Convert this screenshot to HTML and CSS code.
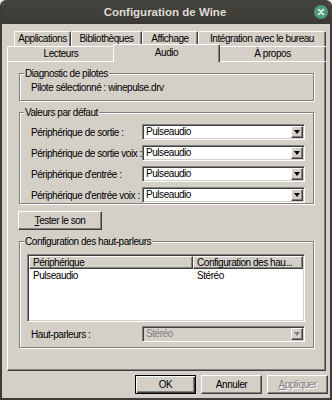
FILE: index.html
```html
<!DOCTYPE html>
<html lang="fr">
<head>
    <meta charset="UTF-8">
    <title>Configuration de Wine</title>
    <link rel="stylesheet" href="styles.css">
</head>
<body>

<div class="window">
    <div class="titlebar">
        <span></span>
        <span class="title">Configuration de Wine</span>
        <span class="close-wrap">
            <svg class="close" width="14" height="14" viewBox="0 0 14 14">
                <circle cx="7" cy="7" r="7" fill="#4e9a7c"/>
                <path d="M4.5 4.5 L9.5 9.5 M9.5 4.5 L4.5 9.5" stroke="#eef4f0" stroke-width="1.6" stroke-linecap="round"/>
            </svg>
        </span>
    </div>

    <div class="content">
        <div class="tabs">
            <div class="tabrow back">
                <div class="tab w-apps">Applications</div>
                <div class="tab w-libs">Bibliothèques</div>
                <div class="tab w-disp">Affichage</div>
                <div class="tab w-desk">Intégration avec le bureau</div>
            </div>
            <div class="tabrow front">
                <div class="tab w-drives">Lecteurs</div>
                <div class="tab w-audio active">Audio</div>
                <div class="tab w-about">À propos</div>
            </div>
        </div>

        <div class="panel">
            <div class="group g-diag">
                <span class="legend">Diagnostic de pilotes</span>
                <div class="driver">Pilote sélectionné : winepulse.drv</div>
            </div>

            <div class="group g-defaults">
                <span class="legend">Valeurs par défaut</span>
                <div class="row">
                    <label>Périphérique de sortie :</label>
                    <div class="combo"><span class="value">Pulseaudio</span><span class="arrow"></span></div>
                </div>
                <div class="row">
                    <label>Périphérique de sortie voix :</label>
                    <div class="combo"><span class="value">Pulseaudio</span><span class="arrow"></span></div>
                </div>
                <div class="row">
                    <label>Périphérique d'entrée :</label>
                    <div class="combo"><span class="value">Pulseaudio</span><span class="arrow"></span></div>
                </div>
                <div class="row">
                    <label>Périphérique d'entrée voix :</label>
                    <div class="combo"><span class="value">Pulseaudio</span><span class="arrow"></span></div>
                </div>
            </div>

            <button class="btn test"><u>T</u>ester le son</button>

            <div class="group g-speakers">
                <span class="legend">Configuration des haut-parleurs</span>
                <div class="listview">
                    <div class="lv-head">
                        <div class="hcell c1">Périphérique</div>
                        <div class="hcell c2">Configuration des hau...</div>
                    </div>
                    <div class="lv-row">
                        <div class="cell c1">Pulseaudio</div>
                        <div class="cell c2">Stéréo</div>
                    </div>
                </div>
                <div class="row">
                    <label>Haut-parleurs :</label>
                    <div class="combo disabled"><span class="value">Stéréo</span><span class="arrow"></span></div>
                </div>
            </div>
        </div>

        <div class="actions">
            <button class="btn default">OK</button>
            <button class="btn">Annuler</button>
            <button class="btn" disabled><u>A</u>ppliquer</button>
        </div>
    </div>
</div>

</body>
</html>
```

FILE: styles.css
```css
* {
    box-sizing: border-box;
}
html, body {
    margin: 0;
    background: #eeeeec;
}
body {
    font-family: "Liberation Sans", Arial, sans-serif;
    font-size: 10px;
    letter-spacing: -0.45px;
    color: #000;
}
.window {
    width: 332px;
    height: 400px;
    background: #d4d0c8;
    border: 2px solid #3c3b37;
    border-top: 0;
    border-radius: 6px 6px 0 0;
    display: flex;
    flex-direction: column;
    overflow: hidden;
}

/* title bar */
.titlebar {
    height: 24px;
    flex: none;
    display: grid;
    grid-template-columns: 1fr auto 1fr;
    align-items: center;
    background: linear-gradient(#45443f, #3a3935);
    padding-right: 2px;
}
.title {
    font-weight: bold;
    font-size: 11.5px;
    letter-spacing: 0;
    color: #dfdbd2;
}
.close-wrap {
    display: flex;
    justify-content: flex-end;
}
.close {
    display: block;
}

/* tabs */
.content {
    flex: 1;
    display: flex;
    flex-direction: column;
}
.tabs {
    margin-top: 7px;
}
.tabrow {
    display: flex;
    height: 15px;
}
.tabrow.back {
    margin-left: 12px;
}
.tabrow.front {
    margin-left: 5px;
}
.tab {
    height: 15px;
    border-top: 1px solid #fff;
    border-left: 1px solid #fff;
    border-right: 1px solid #404040;
    box-shadow: inset -1px 0 #808080;
    border-radius: 2px 2px 0 0;
    text-align: center;
    line-height: 13px;
    white-space: nowrap;
}
.w-apps { width: 57px; }
.w-libs { width: 71px; }
.w-disp { width: 56px; }
.w-desk { width: 128px; }
.w-drives { width: 108px; }
.w-audio { width: 104px; }
.w-about { width: 107px; }
.tab.active {
    position: relative;
    z-index: 1;
    width: 107px;
    height: 18px;
    margin: -2px -1px -1px -2px;
    padding-top: 1px;
    background: #d4d0c8;
}

/* panel */
.panel {
    width: 319px;
    height: 310px;
    margin-left: 5px;
    border: 1px solid;
    border-color: #fff #404040 #404040 #fff;
    box-shadow: inset -1px -1px #808080;
    padding: 11px 11px 0;
    display: flex;
    flex-direction: column;
}
.group {
    border: 1px solid #808080;
    box-shadow: inset 1px 1px #fff, 1px 1px #fff;
    padding: 0 7px 0 11px;
    display: flex;
    flex-direction: column;
    flex: none;
}
.legend {
    align-self: flex-start;
    margin: -7px 0 0 -7px;
    padding: 0 1px;
    height: 13px;
    line-height: 13px;
    background: #d4d0c8;
}
.g-diag {
    height: 28px;
}
.driver {
    margin-top: 1px;
    line-height: 13px;
}
.g-defaults {
    height: 92px;
    margin-top: 11px;
    gap: 5px;
}
.g-speakers {
    height: 107px;
    margin-top: 11px;
}
.row {
    display: flex;
    align-items: center;
    height: 16px;
    flex: none;
}
.row label {
    width: 111px;
    white-space: nowrap;
}

/* combo box */
.combo {
    width: 163px;
    height: 16px;
    display: flex;
    align-items: center;
    background: #fff;
    border: 1px solid;
    border-color: #808080 #fff #fff #808080;
    box-shadow: inset 1px 1px #404040, inset -1px -1px #d4d0c8;
    padding: 1px;
}
.combo .value {
    flex: 1;
    padding-left: 2px;
    line-height: 12px;
}
.arrow {
    width: 12px;
    height: 12px;
    background: #d4d0c8;
    border: 1px solid;
    border-color: #fff #404040 #404040 #fff;
    box-shadow: inset -1px -1px #808080;
    display: flex;
    align-items: center;
    justify-content: center;
}
.arrow::after {
    content: "";
    border-left: 3.5px solid transparent;
    border-right: 3.5px solid transparent;
    border-top: 4px solid #000;
    margin: 0 1px 0 0;
}
.combo.disabled {
    background: #d4d0c8;
    color: #808080;
}
.combo.disabled .arrow::after {
    border-top-color: #808080;
}

/* list view */
.listview {
    width: 278px;
    height: 68px;
    margin: 6px 0 4px -4px;
    background: #fff;
    border: 1px solid;
    border-color: #808080 #fff #fff #808080;
    box-shadow: inset 1px 1px #404040, inset -1px -1px #d4d0c8;
    padding: 1px;
}
.lv-head, .lv-row {
    display: flex;
    line-height: 13px;
}
.hcell {
    height: 13px;
    background: #d4d0c8;
    border: 1px solid;
    border-color: #fff #404040 #404040 #fff;
    box-shadow: inset -1px -1px #808080;
    line-height: 11px;
    padding-left: 3px;
    white-space: nowrap;
}
.c1 { width: 164px; }
.c2 { width: 110px; }
.cell {
    padding-left: 4px;
}

/* buttons */
.btn {
    font: inherit;
    letter-spacing: inherit;
    color: #000;
    width: 61px;
    height: 19px;
    padding: 0;
    background: #d4d0c8;
    border: 1px solid;
    border-color: #fff #404040 #404040 #fff;
    box-shadow: inset -1px -1px #808080;
}
.btn.test {
    width: 84px;
    margin: 7px 0 0 -1px;
    flex: none;
}
.btn.default {
    border-color: #000;
    box-shadow: inset 1px 1px #fff, inset -1px -1px #404040, inset -2px -2px #808080;
}
.btn:disabled {
    color: #808080;
    text-shadow: 1px 1px #fff;
}
.actions {
    display: flex;
    justify-content: flex-end;
    gap: 5px;
    margin-top: 4px;
    padding-right: 2px;
}
```
